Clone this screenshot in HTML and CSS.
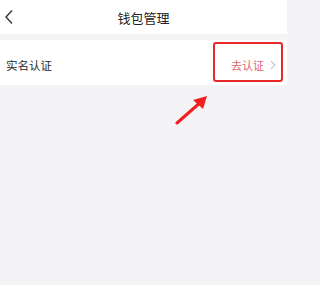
FILE: index.html
```html
<!DOCTYPE html>
<html lang="zh">
<head>
<meta charset="utf-8">
<link rel="stylesheet" href="styles.css">
</head>
<body>
<div class="page">
  <header class="header">
    <svg class="back" width="10" height="16" viewBox="0 0 10 16"><path d="M8 1.5 L2 8 L8 14.5" fill="none" stroke="#333" stroke-width="1.4"/></svg>
    <div class="title">钱包管理</div>
  </header>
  <div class="row">
    <span class="label">实名认证</span>
    <span class="action">去认证<svg class="chev" width="6" height="10" viewBox="0 0 6 10"><path d="M1 1 L5 5 L1 9" fill="none" stroke="#c8c8c8" stroke-width="1.1"/></svg></span>
  </div>
  <div class="mark"></div>
  <svg class="arrow" width="40" height="34" viewBox="0 0 40 34"><path d="M2 31 L27 9" stroke="#f02020" stroke-width="3" stroke-linecap="round"/><path d="M32 4 L18 8 L28 17 Z" fill="#f02020"/></svg>
</div>
</body>
</html>
```
FILE: styles.css
```css
html, body { margin: 0; padding: 0; }
body { background: #f4f4f6; font-family: "Noto Sans CJK SC", "Noto Sans", sans-serif; }
.page { position: relative; width: 287px; height: 285px; }
.header { height: 34px; background: #fff; display: flex; align-items: center; justify-content: center; position: relative; }
.back { position: absolute; left: 4px; top: 9px; }
.title { font-size: 13px; color: #222; }
.row { margin-top: 6px; height: 45px; box-sizing: border-box; background: #fff; display: flex; align-items: center; justify-content: space-between; padding: 4px 11px 0 6px; }
.label { font-size: 11.5px; color: #2a2a2a; }
.action { font-size: 11px; color: #e0646a; display: flex; align-items: center; gap: 6px; }
.mark { position: absolute; left: 213px; top: 42px; width: 66px; height: 36px; border: 2px solid #e8282a; border-radius: 3px; }
.arrow { position: absolute; left: 175px; top: 92px; }
```
